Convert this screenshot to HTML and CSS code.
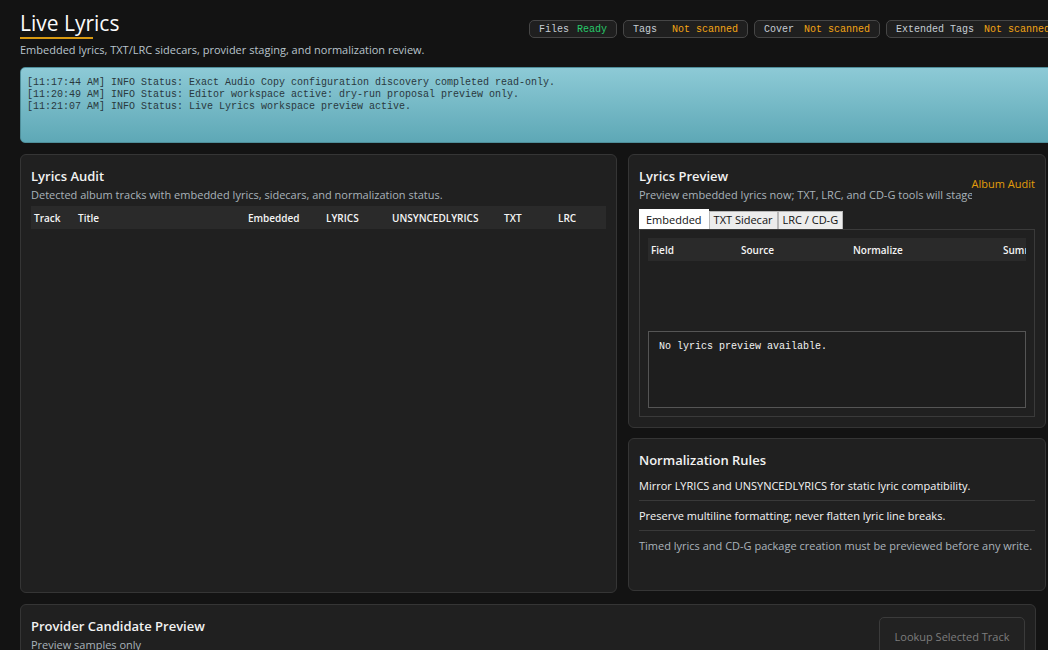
FILE: index.html
```html
<!DOCTYPE html>
<html lang="en">
<head>
    <meta charset="UTF-8">
    <meta name="viewport" content="width=device-width, initial-scale=1.0">
    <title>Live Lyrics</title>
    <link rel="stylesheet" href="styles.css">
</head>
<body>
    <div class="page">
        <header class="top">
            <div class="brand">
                <h1 class="title">Live Lyrics</h1>
                <p class="lead">Embedded lyrics, TXT/LRC sidecars, provider staging, and normalization review.</p>
            </div>
            <div class="badges">
                <span class="badge badge-tight"><span class="badge-label">Files</span><span class="ok">Ready</span></span>
                <span class="badge badge-wide"><span class="badge-label">Tags</span><span class="warn">Not scanned</span></span>
                <span class="badge"><span class="badge-label">Cover</span><span class="warn">Not scanned</span></span>
                <span class="badge"><span class="badge-label">Extended Tags</span><span class="warn">Not scanned</span></span>
            </div>
        </header>

        <pre class="log">[11:17:44 AM] INFO Status: Exact Audio Copy configuration discovery completed read-only.
[11:20:49 AM] INFO Status: Editor workspace active: dry-run proposal preview only.
[11:21:07 AM] INFO Status: Live Lyrics workspace preview active.</pre>

        <div class="workspace">
            <section class="panel audit">
                <h2 class="panel-title">Lyrics Audit</h2>
                <p class="panel-sub">Detected album tracks with embedded lyrics, sidecars, and normalization status.</p>
                <div class="grid-head audit-cols">
                    <span>Track</span>
                    <span>Title</span>
                    <span>Embedded</span>
                    <span>LYRICS</span>
                    <span>UNSYNCEDLYRICS</span>
                    <span>TXT</span>
                    <span>LRC</span>
                </div>
            </section>

            <div class="side">
                <section class="panel preview">
                    <div class="preview-head">
                        <div class="preview-text">
                            <h2 class="panel-title">Lyrics Preview</h2>
                            <p class="panel-sub nowrap">Preview embedded lyrics now; TXT, LRC, and CD-G tools will stage</p>
                        </div>
                        <span class="link">Album Audit</span>
                    </div>
                    <div class="tabs">
                        <span class="tab active">Embedded</span>
                        <span class="tab">TXT Sidecar</span>
                        <span class="tab">LRC / CD-G</span>
                    </div>
                    <div class="tab-body">
                        <div class="grid-head field-cols">
                            <span>Field</span>
                            <span>Source</span>
                            <span>Normalize</span>
                            <span>Summary</span>
                        </div>
                        <div class="field-rows"></div>
                        <pre class="lyrics-box">No lyrics preview available.</pre>
                    </div>
                </section>

                <section class="panel rules">
                    <h2 class="panel-title">Normalization Rules</h2>
                    <ul class="rule-list">
                        <li>Mirror LYRICS and UNSYNCEDLYRICS for static lyric compatibility.</li>
                        <li>Preserve multiline formatting; never flatten lyric line breaks.</li>
                        <li class="muted">Timed lyrics and CD-G package creation must be previewed before any write.</li>
                    </ul>
                </section>
            </div>
        </div>

        <section class="panel provider">
            <div>
                <h2 class="panel-title">Provider Candidate Preview</h2>
                <p class="panel-sub">Preview samples only</p>
            </div>
            <button type="button" class="btn" disabled>Lookup Selected Track</button>
        </section>
    </div>
</body>
</html>
```

FILE: styles.css
```css
* {
    margin: 0;
    padding: 0;
    box-sizing: border-box;
}

html, body {
    overflow: hidden;
}

body {
    background-color: #131313;
    color: #f0f0f0;
    font-family: "Open Sans", "Noto Sans", sans-serif;
    font-size: 11px;
}

.page {
    width: 1037px;
    margin-left: 20px;
    padding-top: 10px;
}

.top {
    display: flex;
    align-items: flex-start;
}

.title {
    display: inline-block;
    font-size: 21px;
    font-weight: 500;
    line-height: 26px;
    color: #fafafa;
}

.title::after {
    content: "";
    display: block;
    width: 73px;
    height: 2px;
    margin-top: 1px;
    background-color: #d89a12;
}

.lead {
    margin-top: 3px;
    color: #b9c4cc;
    line-height: 15px;
}

.badges {
    display: flex;
    gap: 6px;
    margin-left: auto;
    margin-right: -3px;
    margin-top: 10px;
}

.badge {
    display: flex;
    gap: 10px;
    height: 18px;
    align-items: center;
    padding: 1px 9px 0;
    border: 1px solid #464646;
    border-radius: 5px;
    background-color: #1f1f1f;
    font-family: "Liberation Mono", "DejaVu Sans Mono", monospace;
    font-size: 10px;
}

.badge-tight {
    gap: 8px;
}

.badge-wide {
    gap: 15px;
}

.badge-label {
    color: #c5cdd4;
}

.ok {
    color: #27c96a;
}

.warn {
    color: #f4a514;
}

.log {
    height: 76px;
    margin-top: 10px;
    padding: 9px 6px 6px;
    border: 1px solid #4f8e9a;
    border-radius: 5px;
    background: linear-gradient(#8dcad6, #5ea8b6);
    color: #2a383d;
    font-family: "Liberation Mono", "DejaVu Sans Mono", monospace;
    font-size: 10px;
    line-height: 12px;
}

.workspace {
    display: grid;
    grid-template-columns: 597px 418px;
    gap: 11px;
    margin-top: 11px;
}

.panel {
    background-color: #202020;
    border: 1px solid #353535;
    border-radius: 6px;
    padding: 12px 10px 10px;
}

.audit {
    height: 439px;
}

.side {
    display: flex;
    flex-direction: column;
    gap: 10px;
}

.panel-title {
    font-size: 13px;
    font-weight: 600;
    line-height: 19px;
    color: #f2f2f2;
}

.panel-sub {
    color: #a9b3ba;
    line-height: 17px;
}

.nowrap {
    white-space: nowrap;
    overflow: hidden;
}

.grid-head {
    display: grid;
    height: 23px;
    align-items: center;
    background-color: #2a2a2a;
    font-size: 10px;
    font-weight: 600;
    color: #f4f4f4;
    overflow: hidden;
    white-space: nowrap;
}

.grid-head span {
    padding-left: 3px;
    overflow: hidden;
}

.audit .grid-head {
    margin-top: 3px;
}

.audit-cols {
    grid-template-columns: 44px 170px 78px 66px 112px 54px 1fr;
}

.preview {
    height: 274px;
}

.preview-head {
    display: flex;
    align-items: center;
}

.preview-text {
    flex: 1;
    min-width: 0;
}

.link {
    margin-top: -3px;
    color: #e29e0a;
    font-size: 11px;
}

.tabs {
    display: flex;
    align-items: flex-end;
    height: 22px;
    margin-top: 4px;
}

.tab {
    height: 18px;
    padding: 0 4px;
    line-height: 16px;
    border: 1px solid #b8b8b8;
    border-bottom: none;
    background-color: #ececec;
    color: #111;
    font-size: 11px;
}

.tab.active {
    height: 20px;
    padding: 0 6px;
    line-height: 19px;
    background-color: #fff;
    border-color: #fff;
}

.tab-body {
    height: 188px;
    border: 1px solid #3a3a3a;
    padding: 8px;
}

.field-cols {
    grid-template-columns: 90px 112px 150px 1fr;
}

.field-rows {
    height: 70px;
}

.lyrics-box {
    height: 77px;
    padding: 8px 10px;
    border: 1px solid #555;
    background-color: #1e1e1e;
    color: #f3f3f3;
    font-family: "Liberation Mono", "DejaVu Sans Mono", monospace;
    font-size: 10px;
    line-height: 14px;
}

.rules {
    height: 153px;
}

.rule-list {
    list-style: none;
    margin-top: 8px;
}

.rule-list li {
    padding: 7px 0 6px;
    line-height: 16px;
    color: #f5f5f5;
    border-bottom: 1px solid #393939;
}

.rule-list li:first-child {
    padding-top: 0;
}

.rule-list li.muted {
    color: #aab3ba;
    border-bottom: none;
}

.provider {
    display: flex;
    justify-content: space-between;
    width: 1016px;
    margin-top: 11px;
}

.btn {
    width: 146px;
    height: 38px;
    background-color: #222;
    border: 1px solid #3b3b3b;
    border-radius: 5px;
    color: #7d7d7d;
    font-family: "Open Sans", "Noto Sans", sans-serif;
    font-size: 11px;
}
```
